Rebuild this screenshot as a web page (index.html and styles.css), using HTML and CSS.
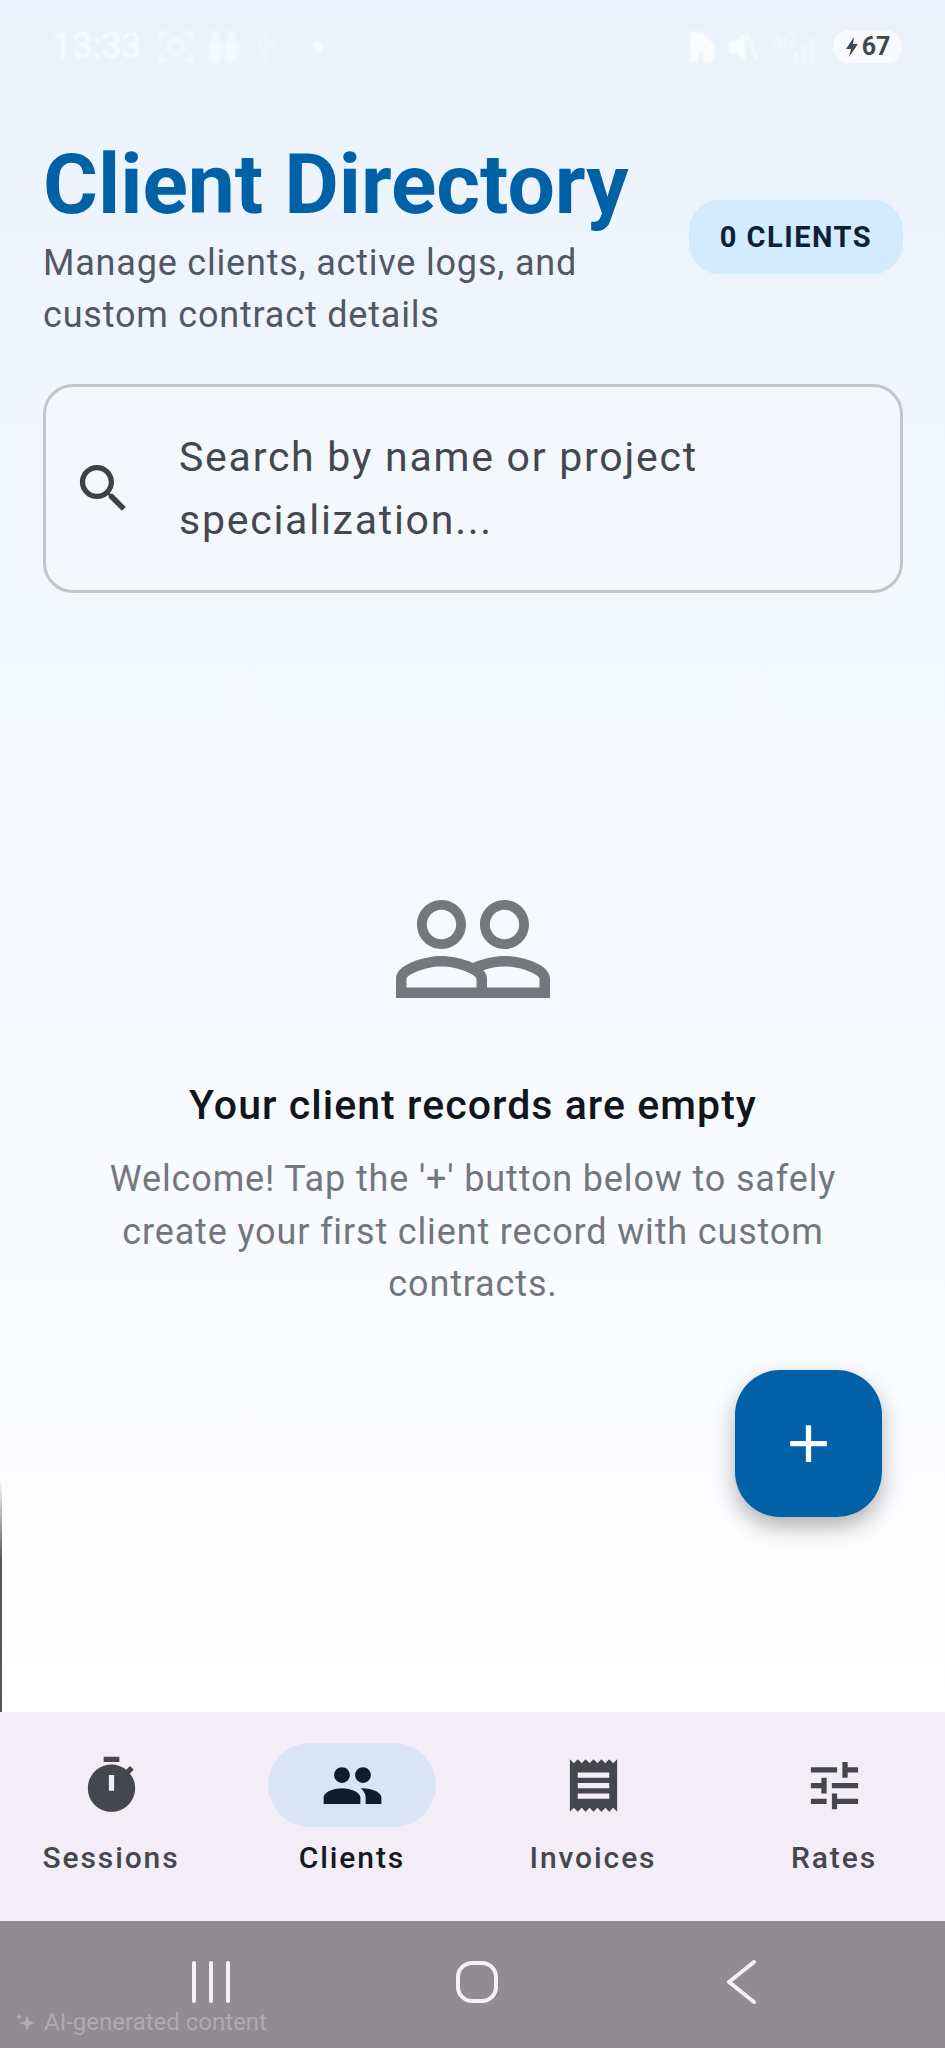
FILE: index.html
```html
<!DOCTYPE html>
<html lang="en">
<head>
<meta charset="utf-8">
<title>Client Directory</title>
<link rel="stylesheet" href="styles.css">
</head>
<body>
<div class="screen">
  <div class="status">
    <div class="status-left">
      <span class="clock">13:33</span>
      <svg class="st-icon" viewBox="0 0 36 34" width="36" height="34"><path d="M3 10V3h7M26 3h7v7M33 24v7h-7M10 31H3v-7" fill="none" stroke="#fff" stroke-width="2.5"/><circle cx="18" cy="17" r="7" fill="none" stroke="#fff" stroke-width="3"/></svg>
      <svg class="st-icon" viewBox="0 0 30 34" width="30" height="34"><rect x="1" y="10" width="12" height="22" rx="4" fill="#fff"/><rect x="17" y="10" width="12" height="22" rx="4" fill="#fff"/><circle cx="7" cy="5" r="4" fill="#fff"/><circle cx="23" cy="5" r="4" fill="#fff"/></svg>
      <svg class="st-icon usb" viewBox="0 0 20 32" width="20" height="32"><path d="M10 1v30M3 8v7l7 5M17 6v6l-7 4" fill="none" stroke="#fff" stroke-width="2"/></svg>
      <span class="dot"></span>
    </div>
    <div class="status-right">
      <svg class="st-icon" viewBox="0 0 26 32" width="26" height="32"><path d="M1 31V1h12l12 12v18H15V21H9v10z" fill="#fff"/></svg>
      <svg class="st-icon" viewBox="0 0 30 32" width="30" height="32"><path d="M2 11h6l8-7v24l-8-7H2zM19 2l10 28" fill="#fff" stroke="#fff" stroke-width="2"/></svg>
      <span class="signal">
        <span class="net">4G</span>
        <svg class="st-icon faint" viewBox="0 0 28 32" width="28" height="32"><rect x="2" y="22" width="4" height="10" fill="#fff"/><rect x="10" y="15" width="4" height="17" fill="#fff"/><rect x="18" y="8" width="4" height="24" fill="#fff"/></svg>
      </span>
      <span class="battery">
        <svg viewBox="0 0 14 22" width="14" height="22"><path d="M9 1 1 13h5l-2 8 9-13H8z" fill="#44474c"/></svg>
        <span>67</span>
      </span>
    </div>
  </div>

  <main class="main">
    <header class="head">
      <div class="head-text">
        <h1 class="title">Client Directory</h1>
        <p class="subtitle">Manage clients, active logs, and custom contract details</p>
      </div>
      <div class="count">0 CLIENTS</div>
    </header>

    <div class="search">
      <svg class="search-icon" viewBox="0 0 24 24" width="63" height="63"><path d="M15.5 14h-.79l-.28-.27C15.41 12.59 16 11.11 16 9.5 16 5.91 13.09 3 9.5 3S3 5.91 3 9.5 5.91 16 9.5 16c1.61 0 3.09-.59 4.23-1.57l.27.28v.79l5 4.99L20.49 19l-4.99-5zm-6 0C7.01 14 5 11.99 5 9.5S7.01 5 9.5 5 14 7.01 14 9.5 11.99 14 9.5 14z"/></svg>
      <div class="search-text">Search by name or project specialization...</div>
    </div>

    <section class="empty">
      <svg class="empty-icon" viewBox="0 0 24 24" width="168" height="168"><path d="M16.5 13c-1.2 0-3.07.34-4.5 1-1.43-.67-3.3-1-4.5-1C5.33 13 1 14.08 1 16.25V19h22v-2.75c0-2.17-4.33-3.25-6.5-3.25zm-4 4.5h-10v-1.25c0-.54 2.56-1.75 5-1.75s5 1.21 5 1.75v1.25zm9 0H14v-1.25c0-.46-.2-.86-.52-1.22.88-.3 1.96-.53 3.02-.53 2.44 0 5 1.21 5 1.75v1.25zM7.5 12c1.93 0 3.5-1.57 3.5-3.5S9.43 5 7.5 5 4 6.57 4 8.5 5.57 12 7.5 12zm0-5.6c1.16 0 2.1.94 2.1 2.1s-.94 2.1-2.1 2.1-2.1-.94-2.1-2.1.94-2.1 2.1-2.1zm9 5.6c1.93 0 3.5-1.57 3.5-3.5S18.43 5 16.5 5 13 6.57 13 8.5s1.57 3.5 3.5 3.5zm0-5.6c1.16 0 2.1.94 2.1 2.1s-.94 2.1-2.1 2.1-2.1-.94-2.1-2.1.94-2.1 2.1-2.1z"/></svg>
      <h2 class="empty-title">Your client records are empty</h2>
      <p class="empty-desc">Welcome! Tap the '+' button below to safely create your first client record with custom contracts.</p>
    </section>

    <button class="fab" type="button" aria-label="Add client">
      <svg viewBox="0 0 24 24" width="63" height="63"><path d="M19 13h-6v6h-2v-6H5v-2h6V5h2v6h6v2z"/></svg>
    </button>
  </main>

  <nav class="tabs">
    <div class="tab">
      <span class="tab-pill"><svg viewBox="0 0 24 24" width="63" height="63"><path fill-rule="evenodd" d="M15 1H9v2h6V1zm-4 13h2V8h-2v6zm8.03-6.61l1.42-1.42c-.43-.51-.9-.99-1.41-1.41l-1.42 1.42C16.07 4.74 14.12 4 12 4c-4.97 0-9 4.03-9 9s4.02 9 9 9 9-4.03 9-9c0-2.12-.74-4.07-1.97-5.61z"/></svg></span>
      <span class="tab-label">Sessions</span>
    </div>
    <div class="tab tab-active">
      <span class="tab-pill"><svg viewBox="0 0 24 24" width="63" height="63"><path d="M16 11c1.66 0 2.99-1.34 2.99-3S17.66 5 16 5c-1.66 0-3 1.34-3 3s1.34 3 3 3zm-8 0c1.66 0 2.99-1.34 2.99-3S9.66 5 8 5C6.34 5 5 6.34 5 8s1.34 3 3 3zm0 2c-2.33 0-7 1.17-7 3.5V19h14v-2.5c0-2.33-4.67-3.5-7-3.5zm8 0c-.29 0-.62.02-.97.05 1.16.84 1.97 1.97 1.97 3.45V19h6v-2.5c0-2.33-4.67-3.5-7-3.5z"/></svg></span>
      <span class="tab-label">Clients</span>
    </div>
    <div class="tab">
      <span class="tab-pill"><svg viewBox="0 0 24 24" width="63" height="63"><path d="M18 17H6v-2h12v2zm0-4H6v-2h12v2zm0-4H6V7h12v2zM3 22l1.5-1.5L6 22l1.5-1.5L9 22l1.5-1.5L12 22l1.5-1.5L15 22l1.5-1.5L18 22l1.5-1.5L21 22V2l-1.5 1.5L18 2l-1.5 1.5L15 2l-1.5 1.5L12 2l-1.5 1.5L9 2 7.5 3.5 6 2 4.5 3.5 3 2v20z"/></svg></span>
      <span class="tab-label">Invoices</span>
    </div>
    <div class="tab">
      <span class="tab-pill"><svg viewBox="0 0 24 24" width="63" height="63"><path d="M3 17v2h6v-2H3zM3 5v2h10V5H3zm10 16v-2h8v-2h-8v-2h-2v6h2zM7 9v2H3v2h4v2h2V9H7zm14 4v-2H11v2h10zm-6-4h2V7h4V5h-4V3h-2v6z"/></svg></span>
      <span class="tab-label">Rates</span>
    </div>
  </nav>

  <div class="sysnav">
    <svg viewBox="0 0 44 44" width="44" height="44"><path d="M5 3v38M22 3v38M39 3v38"/></svg>
    <svg viewBox="0 0 44 44" width="44" height="44"><rect x="3" y="3" width="38" height="38" rx="14"/></svg>
    <svg viewBox="0 0 44 44" width="44" height="44"><path d="M33 2 8 22l25 20"/></svg>
    <div class="ai-label">
      <svg viewBox="0 0 20 20" width="20" height="20"><path d="M11 3l2 6 6 2-6 2-2 6-2-6-6-2 6-2zM3 2l1 2 2 1-2 1-1 2-1-2-2-1 2-1z"/></svg>
      <span>AI-generated content</span>
    </div>
  </div>

  <div class="edge"></div>
</div>
</body>
</html>
```
FILE: styles.css
```css
* { box-sizing: border-box; }
html, body { margin: 0; padding: 0; }
body { font-family: Roboto, "Noto Sans", sans-serif; }

.screen {
  position: relative;
  width: 945px;
  height: 2048px;
  display: flex;
  flex-direction: column;
  overflow: hidden;
  background: linear-gradient(180deg, #e9f2fc 0, #f1f6fe 400px, #f5f8ff 900px, #f9fbff 1300px, #fdfdff 1500px, #ffffff 1712px);
}

/* status bar */
.status {
  height: 96px;
  flex: none;
  display: flex;
  justify-content: space-between;
  align-items: flex-start;
  padding: 30px 43px 0 52px;
}
.status-left, .status-right {
  display: flex;
  align-items: center;
  height: 33px;
}
.status-left { gap: 14px; filter: blur(1.2px); opacity: .75; }
.status-right { gap: 13px; }
.clock { font-size: 36px; color: #fff; line-height: 33px; margin-right: 2px; }
.st-icon { display: block; filter: blur(1.2px); opacity: .8; }
.usb { opacity: .6; margin-left: 4px; }
.faint { opacity: .55; }
.dot { width: 9px; height: 11px; border-radius: 5px; background: #fff; margin-left: 24px; }
.signal { display: flex; align-items: center; gap: 6px; }
.net { font-size: 20px; line-height: 20px; margin: -12px -10px 0 0; color: #fff; opacity: .5; filter: blur(1px); }
.battery {
  width: 69px;
  height: 33px;
  border-radius: 17px;
  background: #f8fafd;
  display: flex;
  align-items: center;
  justify-content: center;
  gap: 3px;
  font-size: 25px;
  font-weight: 700;
  color: #44474c;
}

/* page */
.main {
  position: relative;
  flex: 1;
  padding: 40px 42px 0 43px;
  display: flex;
  flex-direction: column;
}
.head {
  display: flex;
  align-items: center;
  justify-content: space-between;
}
.head-text { width: 600px; flex: none; }
.title {
  margin: 0;
  font-size: 84px;
  line-height: 98px;
  font-weight: 700;
  color: #0061a6;
  white-space: nowrap;
}
.subtitle {
  margin: 3px 0 0;
  width: 560px;
  font-size: 36px;
  line-height: 52px;
  letter-spacing: .8px;
  color: #515862;
}
.count {
  width: 214px;
  height: 74px;
  margin-bottom: 3px;
  border-radius: 30px;
  background: #d2ebfd;
  color: #0d2238;
  display: flex;
  align-items: center;
  justify-content: center;
  font-size: 29px;
  font-weight: 700;
  letter-spacing: 1.5px;
  white-space: nowrap;
}
.search {
  margin-top: 43px;
  height: 209px;
  border: 3px solid #c2c6cc;
  border-radius: 30px;
  background: #f4f7fd;
  padding-left: 26px;
  display: flex;
  align-items: center;
  gap: 44px;
}
.search-icon { flex: none; fill: #3e4247; }
.search-text {
  width: 640px;
  font-size: 41px;
  line-height: 63px;
  letter-spacing: 1.75px;
  color: #44484e;
}

/* empty state */
.empty {
  display: flex;
  flex-direction: column;
  align-items: center;
  margin-top: 272px;
}
.empty-icon { display: block; fill: #74777c; }
.empty-title {
  margin: 46px 0 0;
  font-size: 41px;
  line-height: 52px;
  font-weight: 500;
  letter-spacing: 1.05px;
  color: #12151a;
}
.empty-desc {
  margin: 22px 0 0;
  width: 770px;
  text-align: center;
  font-size: 36px;
  line-height: 52.7px;
  letter-spacing: .85px;
  color: #73777d;
}
.fab {
  position: absolute;
  left: 735px;
  top: 1274px;
  width: 147px;
  height: 147px;
  padding: 0;
  border: 0;
  border-radius: 45px;
  background: #0061a6;
  box-shadow: 0 10px 22px rgba(0, 0, 0, .3);
  display: flex;
  align-items: center;
  justify-content: center;
}
.fab svg { fill: #fff; }

/* bottom tabs */
.tabs {
  flex: none;
  height: 209px;
  background: #f2edf6;
  display: grid;
  grid-template-columns: repeat(4, 241px);
  justify-content: center;
  padding-top: 31px;
}
.tab {
  display: flex;
  flex-direction: column;
  align-items: center;
}
.tab-pill {
  width: 168px;
  height: 84px;
  border-radius: 42px;
  display: flex;
  align-items: center;
  justify-content: center;
}
.tab-pill svg { fill: #44474e; display: block; }
.tab-label {
  margin-top: 13px;
  font-size: 30px;
  line-height: 36px;
  font-weight: 500;
  letter-spacing: 1.9px;
  color: #44474e;
}
.tab-active .tab-pill { background: #d9e5f4; }
.tab-active .tab-pill svg { fill: #0f1c2e; }
.tab-active .tab-label { color: #14181f; }

/* system navigation */
.sysnav {
  position: relative;
  flex: none;
  height: 127px;
  background: #918c92;
  display: flex;
  justify-content: center;
  gap: 222px;
  padding: 39px 0 0 8px;
}
.sysnav > svg { fill: none; stroke: #f4f2f4; stroke-width: 4; stroke-linecap: round; stroke-linejoin: round; }
.ai-label {
  position: absolute;
  left: 16px;
  bottom: 10px;
  display: flex;
  align-items: center;
  gap: 8px;
  font-size: 24px;
  line-height: 32px;
  color: rgba(255, 255, 255, .28);
}
.ai-label svg { fill: rgba(255, 255, 255, .3); }

.edge {
  position: absolute;
  left: 0;
  top: 1480px;
  width: 2px;
  height: 232px;
  background: linear-gradient(180deg, rgba(70, 70, 75, 0), #55565a 80px, #55565a);
}
```
